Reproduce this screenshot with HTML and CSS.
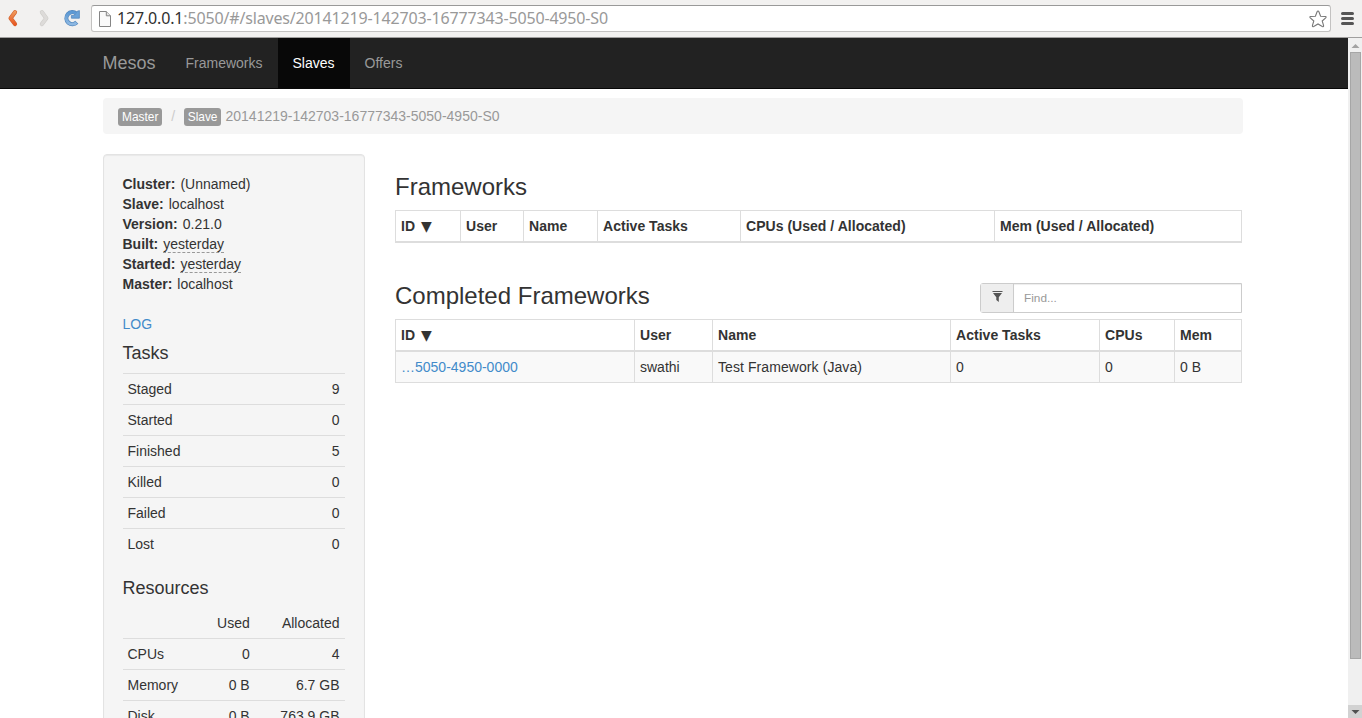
FILE: index.html
```html
<!DOCTYPE html>
<html lang="en">
<head>
<meta charset="utf-8">
<title>Mesos</title>
<link rel="stylesheet" href="styles.css">
</head>
<body>
<header class="toolbar">
  <svg class="tool-icons" width="91" height="37" viewBox="0 0 91 37">
    <defs>
      <linearGradient id="orange" gradientUnits="userSpaceOnUse" x1="0" y1="10" x2="0" y2="26"><stop offset="0" stop-color="#f0a264"/><stop offset="1" stop-color="#e8511d"/></linearGradient>
      <linearGradient id="blue" x1="0" y1="0" x2="0" y2="1"><stop offset="0" stop-color="#5b98d3"/><stop offset="1" stop-color="#8db8e2"/></linearGradient>
    </defs>
    <g fill="none" stroke-linecap="round" stroke-linejoin="round">
      <path d="M15 12.2L10.6 18.2L15 24.1" stroke="#d0622e" stroke-width="4.2"/>
      <path d="M15 12.2L10.6 18.2L15 24.1" stroke="url(#orange)" stroke-width="3"/>
      <path d="M41.9 12.2L46.3 18.2L41.9 24.1" stroke="#cfcdca" stroke-width="4.2"/>
      <path d="M41.9 12.2L46.3 18.2L41.9 24.1" stroke="#dddbd9" stroke-width="3"/>
    </g>
    <path d="M76.3 13.6A6 6 0 1 0 76.8 22.3" fill="none" stroke="#5588bd" stroke-width="4.2"/>
    <path d="M79.4 10.6V18.2H71.4V15.4H74.6L77 11.4Z" fill="#69a2d9" stroke="#5588bd" stroke-width=".8" stroke-linejoin="round"/>
    <path d="M76 13.4A6 6 0 1 0 76.4 22.6" fill="none" stroke="url(#blue)" stroke-width="2.9"/>
  </svg>
  <div class="address">
    <svg width="12" height="16" viewBox="0 0 12 16"><path d="M.5.5H7.3L11.5 4.8V15.5H.5Z" fill="#fafafa" stroke="#858585"/><path d="M7.3.5V4.8H11.5" fill="#e4e4e4" stroke="#858585"/></svg>
    <span class="url"><b>127.0.0.1</b>:5050/#/slaves/20141219-142703-16777343-5050-4950-S0</span>
    <svg class="star" width="20" height="20" viewBox="0 0 20 20"><path d="M10 2Q10.6 2 11 3L12.6 7.2L17.4 7.5Q18.7 7.8 17.7 8.8L14.2 12L15.6 16.6Q15.8 18.2 14.3 17.4L10 14.9L5.7 17.4Q4.2 18.2 4.4 16.6L5.8 12L2.3 8.8Q1.3 7.8 2.6 7.5L7.4 7.2L9 3Q9.4 2 10 2Z" fill="#fff" stroke="#777" stroke-width="1.1"/></svg>
  </div>
  <svg class="menu" width="13" height="13" viewBox="0 0 13 13"><path d="M1.5 1.5H11.5M1.5 6.5H11.5M1.5 11.5H11.5" stroke="#555" stroke-width="3" stroke-linecap="round"/></svg>
</header>
<div class="viewport">
  <div class="page">
    <nav class="navbar">
      <div class="container nav-row">
        <a class="brand">Mesos</a><a class="nav-link">Frameworks</a><a class="nav-link active">Slaves</a><a class="nav-link">Offers</a>
      </div>
    </nav>
    <div class="container">
      <div class="breadcrumb"><span class="badge">Master</span><span class="slash">/</span><span class="badge">Slave</span><span class="crumb-text">20141219-142703-16777343-5050-4950-S0</span></div>
      <div class="columns">
        <aside class="well">
          <dl class="facts">
            <div><dt>Cluster:</dt><dd>(Unnamed)</dd></div>
            <div><dt>Slave:</dt><dd>localhost</dd></div>
            <div><dt>Version:</dt><dd>0.21.0</dd></div>
            <div><dt>Built:</dt><dd><span class="abbr">yesterday</span></dd></div>
            <div><dt>Started:</dt><dd><span class="abbr">yesterday</span></dd></div>
            <div><dt>Master:</dt><dd>localhost</dd></div>
          </dl>
          <a class="link log">LOG</a>
          <h4>Tasks</h4>
          <table class="stats">
            <tr><td>Staged</td><td>9</td></tr>
            <tr><td>Started</td><td>0</td></tr>
            <tr><td>Finished</td><td>5</td></tr>
            <tr><td>Killed</td><td>0</td></tr>
            <tr><td>Failed</td><td>0</td></tr>
            <tr><td>Lost</td><td>0</td></tr>
          </table>
          <h4 class="resources-title">Resources</h4>
          <table class="stats resources">
            <tr><td></td><td>Used</td><td>Allocated</td></tr>
            <tr><td>CPUs</td><td>0</td><td>4</td></tr>
            <tr><td>Memory</td><td>0 B</td><td>6.7 GB</td></tr>
            <tr><td>Disk</td><td>0 B</td><td>763.9 GB</td></tr>
          </table>
        </aside>
        <main class="main">
          <div class="section-head"><h3>Frameworks</h3></div>
          <table class="grid">
            <colgroup><col class="w65"><col class="w63"><col class="w74"><col class="w143"><col class="w254"><col class="w247"></colgroup>
            <thead><tr><th>ID <span class="sort">▼</span></th><th>User</th><th>Name</th><th>Active Tasks</th><th>CPUs (Used / Allocated)</th><th>Mem (Used / Allocated)</th></tr></thead>
          </table>
          <div class="section-head second">
            <h3>Completed Frameworks</h3>
            <div class="find"><span class="find-icon"><svg width="11" height="12" viewBox="0 0 11 12"><path d="M.5 0H10.5V1H.5ZM1 2H10L6.8 6.2V11L4.3 9V6.2Z" fill="#555"/></svg></span><span class="find-input">Find...</span></div>
          </div>
          <table class="grid">
            <colgroup><col class="w239"><col class="w78"><col class="w238"><col class="w149"><col class="w75"><col class="w67"></colgroup>
            <thead><tr><th>ID <span class="sort">▼</span></th><th>User</th><th>Name</th><th>Active Tasks</th><th>CPUs</th><th>Mem</th></tr></thead>
            <tbody><tr><td><a class="link">…5050-4950-0000</a></td><td>swathi</td><td class="name">Test Framework (Java)</td><td>0</td><td>0</td><td>0 B</td></tr></tbody>
          </table>
        </main>
      </div>
    </div>
  </div>
  <div class="scrollbar">
    <svg class="arrow-up" width="14" height="14" viewBox="0 0 14 14"><path d="M3.5 10L7.5 6L11.5 10Z" fill="#a3a3a3"/></svg>
    <div class="thumb"></div>
    <div class="arrow-down"><svg width="14" height="13" viewBox="0 0 14 13"><path d="M3.5 5L7.5 9L11.5 5Z" fill="#505050"/></svg></div>
  </div>
</div>
</body>
</html>
```
FILE: styles.css
```css
* { box-sizing: border-box; }
body {
  margin: 0;
  height: 718px;
  overflow: hidden;
  display: flex;
  flex-direction: column;
  background: #fff;
  color: #333;
  font: 14px/20px "Liberation Sans", Arial, sans-serif;
}
svg { display: block; flex: none; }

/* Browser toolbar */
.toolbar {
  flex: none;
  height: 38px;
  display: flex;
  background: #f2f1f0;
  border-bottom: 1px solid #a09f9e;
}
.address {
  width: 1240px;
  height: 27px;
  margin-top: 5px;
  padding: 0 2.5px 0 7px;
  display: flex;
  align-items: center;
  background: #fff;
  border: 1px solid #c3c2c1;
  border-top-color: #999;
  border-radius: 3px;
}
.url {
  margin-left: 6px;
  padding-bottom: 2px;
  font: 16px/24px "Noto Sans", sans-serif;
  letter-spacing: -0.16px;
  color: #999;
  white-space: nowrap;
}
.url b { font-weight: 400; color: #303030; }
.star { margin-left: auto; }
.menu { margin: 12px 0 0 10px; }

/* Viewport */
.viewport { flex: 1; min-height: 0; display: flex; }
.page { width: 1348px; overflow: hidden; }
.container { width: 1140px; margin: 0 auto 0 103px; }
.navbar { height: 51px; background: #222; border-bottom: 1px solid #080808; }
.nav-row { display: flex; margin-left: 102.5px; }
.brand { padding: 15px 15px 15px 0; font-size: 18px; color: #999; }
.nav-link { padding: 15px; color: #999; }
.nav-link.active { background: #080808; color: #fff; }

.breadcrumb {
  height: 36px;
  margin: 9px 0 20px;
  padding: 0 15px;
  display: flex;
  align-items: center;
  background: #f5f5f5;
  border-radius: 4px;
  color: #999;
}
.badge {
  height: 18px;
  padding: 0 4px;
  margin-top: 2px;
  background: #999;
  border-radius: 3px;
  color: #fff;
  font-size: 11.9px;
  line-height: 18px;
}
.slash { padding: 0 8.5px 0 9px; color: #ccc; }
.crumb-text { margin-left: 4px; }

.columns { display: flex; gap: 30px; }
.well {
  width: 262px;
  height: 620px;
  padding: 19px;
  background: #f5f5f5;
  border: 1px solid #e3e3e3;
  border-radius: 4px;
  box-shadow: inset 0 1px 1px rgba(0, 0, 0, .05);
}
.facts { margin: 0 0 20px -0.5px; }
.facts div { display: flex; gap: 5px; }
.facts dt { font-weight: 700; }
.facts dd { margin: 0; }
.abbr { display: block; height: 19px; border-bottom: 1px dashed #999; }
.link { color: #428bca; }
.log { display: block; margin-left: -0.5px; }
h3, h4 { margin: 0; font-weight: 500; }
h4 { margin-left: -0.5px; padding: 9px 0 10px; font-size: 18px; }
.stats { width: 222px; border-collapse: separate; border-spacing: 0; }
.stats td { height: 31px; padding: 5px 5.5px 5px 4.5px; border-top: 1px solid #ddd; text-align: right; }
.stats td:first-child { text-align: left; }
.resources-title { padding: 19px 0 10px; }
.resources tr:first-child td { border-top: 0; height: 30px; }
.resources td:nth-child(2) { padding-right: 7px; }

.main { width: 847px; }
.section-head { height: 56px; padding-top: 20px; display: flex; justify-content: space-between; }
.section-head.second { height: 76px; padding-top: 40px; }
h3 { font-size: 24px; line-height: 26px; }
.grid { width: 847px; table-layout: fixed; border-collapse: separate; border-spacing: 0; border-left: 1px solid #ddd; }
.grid th, .grid td { padding: 5px; border: solid #ddd; border-width: 0 1px 1px 0; text-align: left; white-space: nowrap; }
.grid th { height: 33px; border-width: 1px 1px 2px 0; letter-spacing: 0.03px; }
.grid td { height: 31px; background: #f9f9f9; }
.grid .name { letter-spacing: 0.08px; }
.sort { margin-left: 2px; font: 400 14px/14px "DejaVu Sans", sans-serif; }
.w65 { width: 65px; } .w63 { width: 63px; } .w74 { width: 74px; }
.w143 { width: 143px; } .w254 { width: 254px; } .w247 { width: 247px; }
.w239 { width: 239px; } .w78 { width: 78px; } .w238 { width: 238px; }
.w149 { width: 149px; } .w75 { width: 75px; } .w67 { width: 67px; }

.find { width: 262px; height: 30px; display: flex; border: 1px solid #ccc; border-radius: 3px 0 0 3px; }
.find-icon { width: 33px; padding: 7px 0 0 10.5px; background: #eee; border-right: 1px solid #ccc; }
.find-input { flex: 1; padding: 0 10px; color: #999; font-size: 11.8px; line-height: 28px; box-shadow: inset 0 1px 1px rgba(0, 0, 0, .075); }

/* Scrollbar */
.scrollbar { width: 14px; display: flex; flex-direction: column; background: #f0f0f0; }
.thumb { height: 607px; margin: 0 1px 0 2px; background: #bbb; border: 1px solid #a6a6a6; }
.arrow-down { margin-top: auto; background: #d2d2d2; }
```
